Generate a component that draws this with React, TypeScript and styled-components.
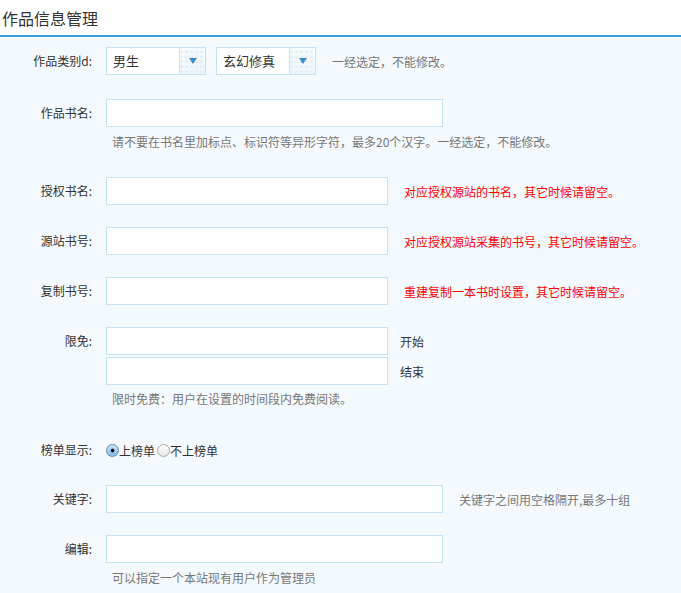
import React, { FC } from "react";
import styled, { createGlobalStyle } from "styled-components";

const GlobalStyle = createGlobalStyle`
	html, body {
		margin: 0;
		padding: 0;
		background: #f4f9fe;
	}
	body {
		font-family: "Noto Sans CJK SC", "Liberation Sans", sans-serif;
		font-size: 12px;
		color: #333;
	}
`;

interface RowProps {
	mb?: number;
}
interface NoteProps {
	red?: boolean;
}

const Page = styled.div`
	width: 681px;
	height: 593px;
	overflow: hidden;
	background: #f4f9fe;
`;
const Header = styled.div`
	height: 35px;
	display: flex;
	align-items: center;
	padding-left: 2px;
	background: #fff;
	border-bottom: 2px solid #3a9edb;
	font-size: 16px;
	color: #333;
`;
const Form = styled.div`
	padding-top: 10px;
`;
const Row = styled.div<RowProps>`
	display: grid;
	grid-template-columns: 94px 1fr;
	column-gap: 12px;
	margin-bottom: ${(p) => (p.mb ?? 22)}px;
`;
const Label = styled.div`
	height: 28px;
	line-height: 28px;
	text-align: right;
	padding-right: 2px;
	color: #333;
	white-space: nowrap;
`;
const Field = styled.div`
	display: flex;
	flex-direction: column;
	gap: 2px;
`;
const Line = styled.div`
	display: flex;
	align-items: center;
	gap: 16px;
	height: 28px;
`;
const Input = styled.input<{ w: number }>`
	box-sizing: border-box;
	width: ${(p) => p.w}px;
	height: 28px;
	margin: 0;
	padding: 0 6px;
	border: 1px solid #c4e2f6;
	background: #fff;
	outline: none;
	font: inherit;
`;
const Note = styled.span<NoteProps>`
	color: ${(p) => (p.red ? "#f00" : "#777")};
	white-space: nowrap;
`;
const Hint = styled.div`
	margin-top: 3px;
	padding-left: 6px;
	line-height: 20px;
	color: #777;
	white-space: nowrap;
`;
const Select = styled.div`
	box-sizing: border-box;
	width: 100px;
	height: 28px;
	display: flex;
	border: 1px solid #c4e2f6;
	background: #fff;
`;
const SelectText = styled.div`
	flex: 1;
	padding-left: 6px;
	line-height: 26px;
	font-size: 13px;
	color: #333;
`;
const SelectArrow = styled.div`
	width: 25px;
	border-left: 1px solid #c4e2f6;
	display: flex;
	align-items: center;
	justify-content: center;
	background:
		radial-gradient(circle at 30% 80%, #e3eef6 1px, transparent 2px) 0 0 / 5px 5px,
		linear-gradient(#f7fbfe, #eef5fb);
	&::after {
		content: "";
		width: 0;
		height: 0;
		border-left: 4px solid transparent;
		border-right: 4px solid transparent;
		border-top: 6px solid #3b8bc6;
	}
`;
const Selects = styled.div`
	display: flex;
	align-items: center;
	gap: 10px;
	height: 28px;
`;
const RadioGroup = styled.div`
	display: flex;
	align-items: center;
	height: 28px;
`;
const RadioItem = styled.label`
	display: flex;
	align-items: center;
	color: #333;
	margin-right: 2px;
`;
const RadioDot = styled.span<{ checked?: boolean }>`
	box-sizing: border-box;
	width: 13px;
	height: 13px;
	border-radius: 50%;
	margin-right: 0;
	border: 1px solid ${(p) => (p.checked ? "#5e8fb8" : "#a9a9a9")};
	background: ${(p) =>
		p.checked
			? "radial-gradient(circle, #000 0 1.6px, transparent 2.2px), linear-gradient(#cfe6fb, #7fb7ea)"
			: "linear-gradient(#fff, #e6e6e6)"};
`;

const SelectBox: FC<{ value: string }> = ({ value }) => (
	<Select>
		<SelectText>{value}</SelectText>
		<SelectArrow />
	</Select>
);

export default function App() {
	return (
		<Page>
			<GlobalStyle />
			<Header>作品信息管理</Header>
			<Form>
				<Row mb={24}>
					<Label>作品类别d:</Label>
					<Field>
						<Selects>
							<SelectBox value="男生" />
							<SelectBox value="玄幻修真" />
							<Note style={{ marginLeft: 6 }}>一经选定，不能修改。</Note>
						</Selects>
					</Field>
				</Row>
				<Row mb={25}>
					<Label>作品书名:</Label>
					<Field>
						<Input w={337} />
						<Hint>请不要在书名里加标点、标识符等异形字符，最多20个汉字。一经选定，不能修改。</Hint>
					</Field>
				</Row>
				<Row>
					<Label>授权书名:</Label>
					<Line>
						<Input w={282} />
						<Note red>对应授权源站的书名，其它时候请留空。</Note>
					</Line>
				</Row>
				<Row>
					<Label>源站书号:</Label>
					<Line>
						<Input w={282} />
						<Note red>对应授权源站采集的书号，其它时候请留空。</Note>
					</Line>
				</Row>
				<Row>
					<Label>复制书号:</Label>
					<Line>
						<Input w={282} />
						<Note red>重建复制一本书时设置，其它时候请留空。</Note>
					</Line>
				</Row>
				<Row mb={27}>
					<Label>限免:</Label>
					<Field>
						<Line style={{ gap: 12 }}>
							<Input w={282} />
							<span>开始</span>
						</Line>
						<Line style={{ gap: 12 }}>
							<Input w={282} />
							<span>结束</span>
						</Line>
						<Hint style={{ marginTop: 2 }}>限时免费：用户在设置的时间段内免费阅读。</Hint>
					</Field>
				</Row>
				<Row mb={21}>
					<Label>榜单显示:</Label>
					<RadioGroup>
						<RadioItem>
							<RadioDot checked />
							上榜单
						</RadioItem>
						<RadioItem>
							<RadioDot />
							不上榜单
						</RadioItem>
					</RadioGroup>
				</Row>
				<Row>
					<Label>关键字:</Label>
					<Line>
						<Input w={337} />
						<Note>关键字之间用空格隔开,最多十组</Note>
					</Line>
				</Row>
				<Row>
					<Label>编辑:</Label>
					<Field>
						<Input w={337} />
						<Hint>可以指定一个本站现有用户作为管理员</Hint>
					</Field>
				</Row>
			</Form>
		</Page>
	);
}
